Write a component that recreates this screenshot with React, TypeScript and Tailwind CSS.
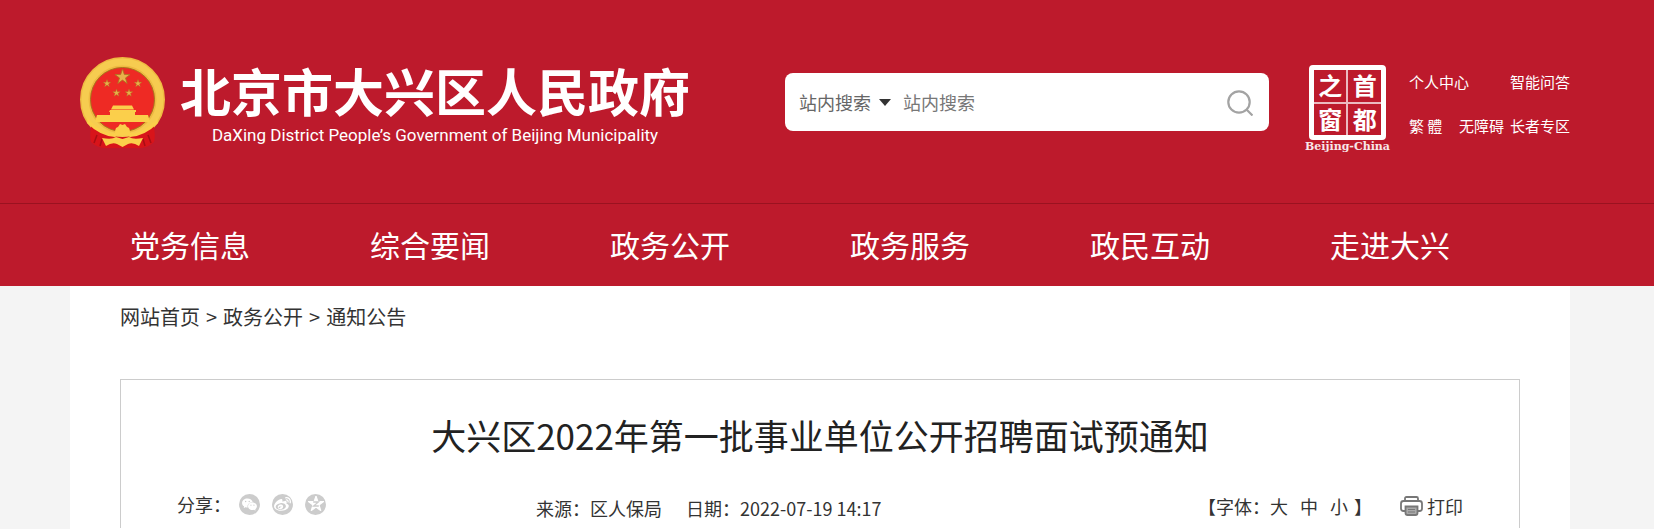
import { useState } from 'react'
import { FaWeibo } from 'react-icons/fa'
import { AiFillWechat } from 'react-icons/ai'

const NAV_ITEMS = ['党务信息', '综合要闻', '政务公开', '政务服务', '政民互动', '走进大兴']

const CRUMBS = ['网站首页', '政务公开', '通知公告']

const FONT_SIZES = ['大', '中', '小']

export default function App() {
  return (
    <div className="min-h-screen bg-[#f4f4f4] font-['Noto_Sans_CJK_SC',sans-serif] text-[#333]">
      <header className="bg-[#bd1a2c] text-white">
        <div className="border-b border-[#9a1220] pr-3.5">
          <div className="mx-auto flex h-[203px] max-w-[1500px] items-center pl-2.5">
            <SiteLogo />
            <SearchBar />
            <CapitalSeal />
            <TopLinks />
          </div>
        </div>
        <nav className="pr-3.5 pb-0.5">
          <ul className="mx-auto flex max-w-[1500px]">
            {NAV_ITEMS.map((item) => (
              <li key={item} className="w-[240px] text-center text-[30px] leading-[80px]">
                <a href="#">{item}</a>
              </li>
            ))}
          </ul>
        </nav>
      </header>
      <div className="pr-3.5">
        <main className="mx-auto min-h-[243px] max-w-[1500px] bg-white px-[50px]">
          <Breadcrumb />
          <Article />
        </main>
      </div>
    </div>
  )
}

function SiteLogo() {
  return (
    <a href="#" className="flex shrink-0 items-center gap-3.5 pt-0.5">
      <Emblem />
      <span className="flex flex-col items-center pt-1 whitespace-nowrap">
        <span className="text-[51px] leading-[60px] font-bold">北京市大兴区人民政府</span>
        <span className="font-['Liberation_Sans_Narrow','Roboto',sans-serif] text-[17px] leading-[30px]">
          DaXing District People’s Government of Beijing Municipality
        </span>
      </span>
    </a>
  )
}

const STAR = 'M0-10 2.3-3.1H9.5L3.7 1.2 5.9 8.1 0 3.9-5.9 8.1-3.7 1.2-9.5-3.1H-2.3Z'

function Emblem() {
  return (
    <svg viewBox="0 0 86 92" className="h-[92px] w-[86px]" aria-hidden="true">
      <circle cx="42.5" cy="42.5" r="37" fill="none" stroke="#efba42" strokeWidth="11" />
      <circle cx="42.5" cy="42.5" r="37.5" fill="none" stroke="#f6cc50" strokeWidth="7" />
      <circle cx="42.5" cy="42.5" r="32" fill="#ee2a24" stroke="#a8761d" strokeWidth="1" />
      <path d="M12 66Q9 78 11 85q5 5 13 6h37q8-1 13-6 2-7-1-19-12 14-30.500 14T12 66Z" fill="#d8141a" />
      <path d="M17 78l-3 8M68 78l3 8M22 82l-2 7M63 82l2 7" stroke="#a80d14" strokeWidth="1.5" />
      <g fill="#e8b04a" stroke="#a9761f" strokeWidth="1">
        <path d={STAR} transform="translate(42.5 20) scale(.8)" />
        <path d={STAR} transform="translate(27 26.500) scale(.4)" />
        <path d={STAR} transform="translate(58 26.500) scale(.4)" />
        <path d={STAR} transform="translate(36.500 36) scale(.4)" />
        <path d={STAR} transform="translate(49 36) scale(.4)" />
      </g>
      <g fill="#fbcf4b">
        <path d="M33 48.500h19l2 4H31Z" />
        <path d="M30 53h26v2h-1v3h13l2 7H15l2-7h13v-3h-1Z" />
        <path d="M8 61q15 17 27 15 0-6 3-6l2-3 2.500 1 2.500-1 2 3q3 0 3 6 12 2 27-15l1 5Q65 79 50 80q-4-4-7.500-1-3.500-3-7.500 1Q20 79 7 66Z" />
        <path d="M22 81q10 2 14-1l6.500 2 6.500-2q4 3 14 1l-4 8q-6-4-11-2l-5.500 3-5.500-3q-5-2-11 2Z" />
      </g>
    </svg>
  )
}

function SearchBar() {
  const [query, setQuery] = useState('')
  return (
    <form
      role="search"
      onSubmit={(e) => e.preventDefault()}
      className="ml-[95px] flex h-[58px] w-[484px] items-center rounded-lg bg-white pt-0.5 pr-4 pl-3.5 text-[18px] text-[#666]"
    >
      <label className="relative flex w-[104px] shrink-0 items-center">
        <select aria-label="搜索范围" className="w-[96px] appearance-none bg-transparent outline-none">
          <option>站内搜索</option>
        </select>
        <svg viewBox="0 0 12 7" className="pointer-events-none absolute right-3 h-[7px] w-3" fill="#333">
          <path d="M0 0h12L6 7Z" />
        </svg>
      </label>
      <input
        type="text"
        aria-label="站内搜索"
        placeholder="站内搜索"
        value={query}
        onChange={(e) => setQuery(e.target.value)}
        className="min-w-0 flex-1 bg-transparent outline-none placeholder:text-[#777]"
      />
      <button type="submit" aria-label="搜索">
        <svg viewBox="0 0 26 26" className="size-[26px]" fill="none" stroke="#a3a3a3" strokeWidth="2.200">
          <circle cx="12" cy="12" r="10.700" />
          <path d="m19.500 19.500 6 6" />
        </svg>
      </button>
    </form>
  )
}

function CapitalSeal() {
  return (
    <a href="#" className="ml-9 flex shrink-0 flex-col items-center pt-4">
      <span className="grid h-[75px] w-[77px] grid-cols-2 grid-rows-2 rounded border-[5px] border-white text-center text-[24px] leading-[30px] font-bold">
        <span className="border-r border-b border-white/70">之</span>
        <span className="border-b border-l border-white/70">首</span>
        <span className="border-t border-r border-white/70">窗</span>
        <span className="border-t border-l border-white/70">都</span>
      </span>
      <span className="font-['DejaVu_Serif',serif] text-[11px] leading-[14px] font-bold whitespace-nowrap text-white/90">
        Beijing-China
      </span>
    </a>
  )
}

function TopLinks() {
  return (
    <div className="ml-auto flex w-[161px] shrink-0 flex-col gap-5 pt-1 text-[15px] leading-6 whitespace-nowrap">
      <div className="flex justify-between">
        <a href="#">个人中心</a>
        <a href="#">智能问答</a>
      </div>
      <div className="flex justify-between">
        <a href="#">繁 體</a>
        <span className="flex gap-1.5">
          <a href="#">无障碍</a>
          <a href="#">长者专区</a>
        </span>
      </div>
    </div>
  )
}

function Breadcrumb() {
  return (
    <div className="flex gap-1.5 pt-[15px] text-[20px] leading-8">
      {CRUMBS.map((crumb, i) => (
        <span key={crumb} className="flex gap-1.5">
          {i > 0 && <span>&gt;</span>}
          <a href="#">{crumb}</a>
        </span>
      ))}
    </div>
  )
}

function Article() {
  return (
    <article className="mt-[46px] border border-b-0 border-[#ccc] px-14 pt-[30px] pb-1">
      <h1 className="text-center text-[35px] leading-[50px] text-[#222]">
        大兴区2022年第一批事业单位公开招聘面试预通知
      </h1>
      <div className="mt-7 flex items-start text-[18px] leading-8">
        <ShareLinks />
        <p className="flex gap-6 pt-1">
          <span>来源：区人保局</span>
          <span>日期：2022-07-19 14:17</span>
        </p>
        <div className="ml-auto flex items-center pt-0.5">
          <span>【字体：</span>
          <span className="flex gap-3">
            {FONT_SIZES.map((size) => (
              <button key={size} type="button">
                {size}
              </button>
            ))}
          </span>
          <span className="ml-1.5">】</span>
          <button type="button" className="ml-7 flex items-center gap-1">
            <PrinterIcon />
            打印
          </button>
        </div>
      </div>
    </article>
  )
}

function ShareLinks() {
  return (
    <div className="flex w-[359px] items-center">
      <span>分享：</span>
      <span className="ml-2 flex gap-3">
        <a href="#" aria-label="微信" className="flex size-[21px] items-center justify-center rounded-full bg-[#ccc] text-white">
          <AiFillWechat className="size-[17px]" />
        </a>
        <a href="#" aria-label="微博" className="flex size-[21px] items-center justify-center rounded-full bg-[#ccc] text-white">
          <FaWeibo className="size-[17px]" />
        </a>
        <a href="#" aria-label="QQ空间" className="flex size-[21px] items-center justify-center rounded-full bg-[#ccc] text-white">
          <svg viewBox="-10 -10 20 20" className="size-4" fill="currentColor">
            <path d={STAR} stroke="currentColor" strokeWidth="1.500" strokeLinejoin="round" />
            <path d="M-3.500-2.500h6.500l-6 5h6.500" fill="none" stroke="#ccc" strokeWidth="1.600" />
          </svg>
        </a>
      </span>
    </div>
  )
}

function PrinterIcon() {
  return (
    <svg viewBox="0 0 23 20" className="h-5 w-[23px]" fill="none" stroke="#777" strokeWidth="1.800">
      <path d="M5 5V2.500Q5 1 6.500 1h10Q18 1 18 2.500V5" />
      <path d="M5 15H3.500Q1 15 1 12.500v-5Q1 5 3.500 5h16Q22 5 22 7.500v5Q22 15 19.500 15H18" />
      <path d="M5.500 10.500h12V17q0 2-2 2h-8q-2 0-2-2Z" fill="#aaa" />
      <path d="M8 13.500h7M8 16h7" stroke="#777" strokeWidth="1" />
    </svg>
  )
}
